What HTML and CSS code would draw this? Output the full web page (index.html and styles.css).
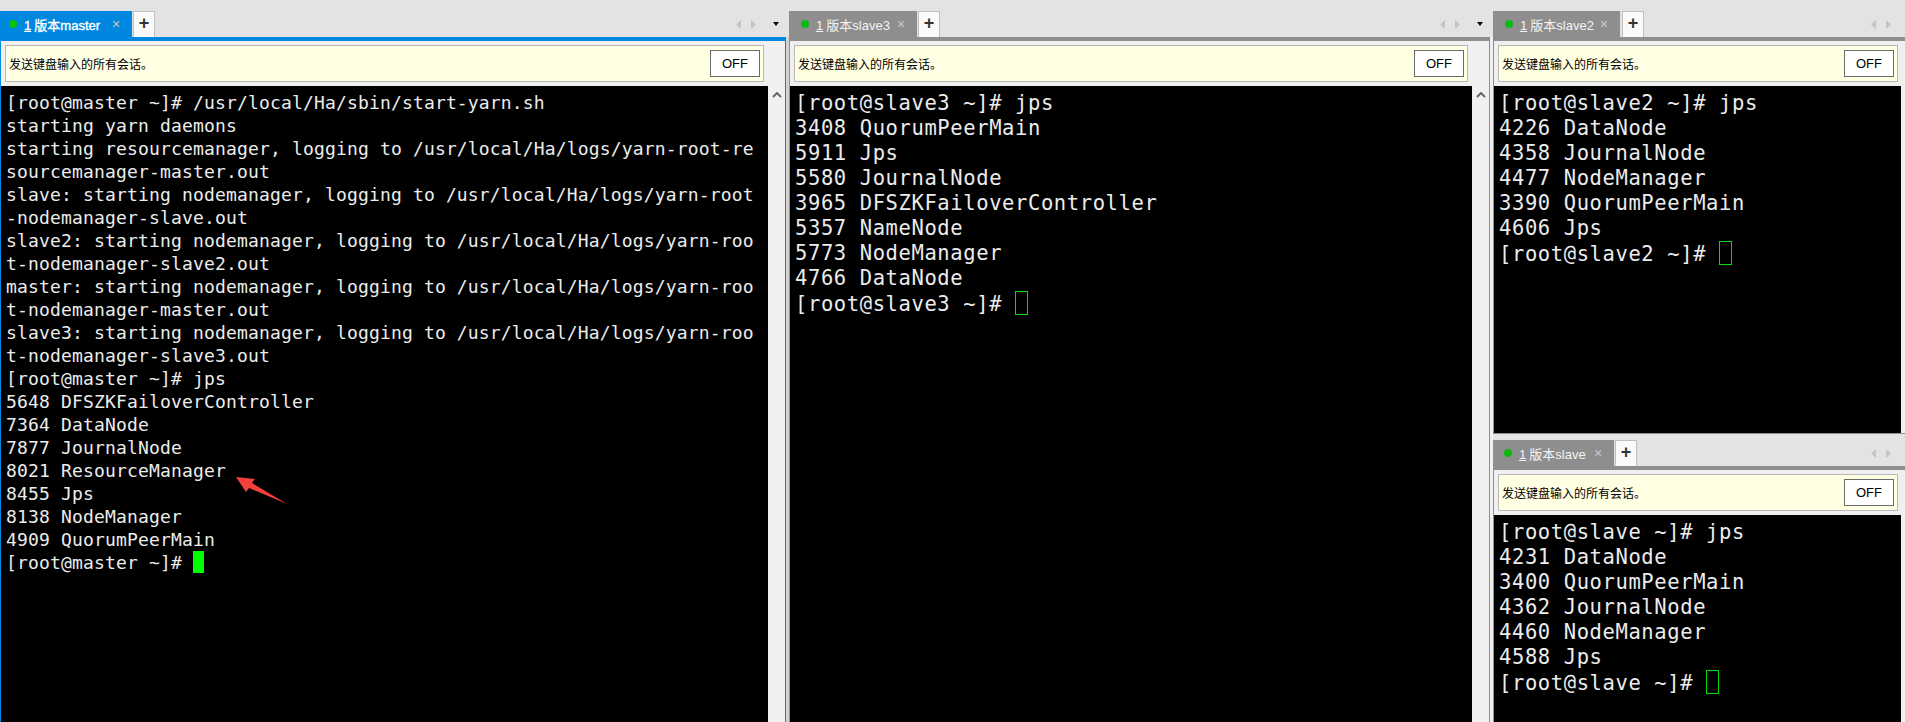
FILE: index.html
```html
<!DOCTYPE html>
<html lang="zh">
<head>
<meta charset="utf-8">
<title>Xshell</title>
<link rel="stylesheet" href="styles.css">
</head>
<body>
<div class="app">
  <section class="pane pane-main active">
    <div class="strip strip-top">
      <div class="tab"><span class="dot"></span><span class="tab-label"><u>1</u> 版本master</span><span class="close">×</span></div>
      <div class="plus">+</div>
      <div class="nav">
        <svg class="navs" width="20" height="9" viewBox="0 0 20 9"><path d="M5 0v9L0 4.5z" fill="#c4c4c4"/><path d="M15 0v9l5-4.5z" fill="#c4c4c4"/></svg>
        <svg class="caret" width="6" height="4" viewBox="0 0 6 4"><path d="M0 0h6L3 4z" fill="#000"/></svg>
      </div>
    </div>
    <div class="rule"></div>
    <div class="body">
      <div class="main">
        <div class="notice"><span>发送键盘输入的所有会话。</span><button class="off">OFF</button></div>
        <pre class="term term-sm">[root@master ~]# /usr/local/Ha/sbin/start-yarn.sh
starting yarn daemons
starting resourcemanager, logging to /usr/local/Ha/logs/yarn-root-re
sourcemanager-master.out
slave: starting nodemanager, logging to /usr/local/Ha/logs/yarn-root
-nodemanager-slave.out
slave2: starting nodemanager, logging to /usr/local/Ha/logs/yarn-roo
t-nodemanager-slave2.out
master: starting nodemanager, logging to /usr/local/Ha/logs/yarn-roo
t-nodemanager-master.out
slave3: starting nodemanager, logging to /usr/local/Ha/logs/yarn-roo
t-nodemanager-slave3.out
[root@master ~]# jps
5648 DFSZKFailoverController
7364 DataNode
7877 JournalNode
8021 ResourceManager
8455 Jps
8138 NodeManager
4909 QuorumPeerMain
[root@master ~]# <span class="cursor solid"></span></pre>
      </div>
      <div class="scroll"><svg width="10" height="6" viewBox="0 0 10 6"><path d="M1 5l4-4 4 4" fill="none" stroke="#666" stroke-width="2"/></svg></div>
    </div>
    <svg class="arrow" width="60" height="35" viewBox="0 0 60 35"><path d="M1 1L20 3 17 7 52 28 14 12 11 16z" fill="#f5403c"/></svg>
  </section>

  <section class="pane pane-mid">
    <div class="strip strip-top">
      <div class="tab"><span class="dot"></span><span class="tab-label"><u>1</u> 版本slave3</span><span class="close">×</span></div>
      <div class="plus">+</div>
      <div class="nav">
        <svg class="navs" width="20" height="9" viewBox="0 0 20 9"><path d="M5 0v9L0 4.5z" fill="#c4c4c4"/><path d="M15 0v9l5-4.5z" fill="#c4c4c4"/></svg>
        <svg class="caret" width="6" height="4" viewBox="0 0 6 4"><path d="M0 0h6L3 4z" fill="#000"/></svg>
      </div>
    </div>
    <div class="rule"></div>
    <div class="body">
      <div class="main">
        <div class="notice"><span>发送键盘输入的所有会话。</span><button class="off">OFF</button></div>
        <pre class="term term-lg">[root@slave3 ~]# jps
3408 QuorumPeerMain
5911 Jps
5580 JournalNode
3965 DFSZKFailoverController
5357 NameNode
5773 NodeManager
4766 DataNode
[root@slave3 ~]# <span class="cursor hollow"></span></pre>
      </div>
      <div class="scroll"><svg width="10" height="6" viewBox="0 0 10 6"><path d="M1 5l4-4 4 4" fill="none" stroke="#666" stroke-width="2"/></svg></div>
    </div>
  </section>

  <div class="stack">
    <section class="pane pane-side pane-upper">
      <div class="strip strip-top">
        <div class="tab"><span class="dot"></span><span class="tab-label"><u>1</u> 版本slave2</span><span class="close">×</span></div>
        <div class="plus">+</div>
        <div class="nav">
          <svg class="navs" width="20" height="9" viewBox="0 0 20 9"><path d="M5 0v9L0 4.5z" fill="#c4c4c4"/><path d="M15 0v9l5-4.5z" fill="#c4c4c4"/></svg>
        </div>
      </div>
      <div class="rule"></div>
      <div class="body">
        <div class="main">
          <div class="notice"><span>发送键盘输入的所有会话。</span><button class="off">OFF</button></div>
          <pre class="term term-lg">[root@slave2 ~]# jps
4226 DataNode
4358 JournalNode
4477 NodeManager
3390 QuorumPeerMain
4606 Jps
[root@slave2 ~]# <span class="cursor hollow"></span></pre>
        </div>
      </div>
    </section>
    <section class="pane pane-side pane-lower">
      <div class="strip strip-bottom">
        <div class="tab"><span class="dot"></span><span class="tab-label"><u>1</u> 版本slave</span><span class="close">×</span></div>
        <div class="plus">+</div>
        <div class="nav">
          <svg class="navs" width="20" height="9" viewBox="0 0 20 9"><path d="M5 0v9L0 4.5z" fill="#c4c4c4"/><path d="M15 0v9l5-4.5z" fill="#c4c4c4"/></svg>
        </div>
      </div>
      <div class="rule"></div>
      <div class="body">
        <div class="main">
          <div class="notice"><span>发送键盘输入的所有会话。</span><button class="off">OFF</button></div>
          <pre class="term term-lg">[root@slave ~]# jps
4231 DataNode
3400 QuorumPeerMain
4362 JournalNode
4460 NodeManager
4588 Jps
[root@slave ~]# <span class="cursor hollow"></span></pre>
        </div>
      </div>
    </section>
  </div>
</div>
</body>
</html>
```

FILE: styles.css
```css
* { box-sizing: border-box; }
html, body { margin: 0; height: 100%; overflow: hidden; }
body { font-family: "Liberation Sans", "Noto Sans CJK SC", sans-serif; background: #f0f0f0; }

.app { display: grid; grid-template-columns: 789px 704px 412px; height: 722px; }
.pane { position: relative; display: flex; flex-direction: column; min-height: 0; }
.stack { display: grid; grid-template-rows: 434px 288px; min-height: 0; }

/* tab strip */
.strip { display: flex; align-items: flex-end; background: #e3e3e3; flex: none; }
.strip-top { height: 37px; }
.strip-bottom { height: 32px; }
.rule { height: 4px; flex: none; background: #8e8e8e; }
.active .rule { background: #0088e0; }
.pane-main .rule, .pane-mid .rule { margin-right: 3px; }

.tab { display: flex; align-items: center; width: 128px; height: 26px; background: #8e8e8e; color: #f4f4f4; padding-left: 12px; font-size: 13px; }
.pane-main .tab { width: 132px; padding-left: 9px; background: #0088e0; color: #fff; }
.pane-main .tab-label { -webkit-text-stroke: 0.35px #fff; }
.pane-upper .tab { width: 127px; }
.pane-lower .tab { width: 121px; padding-left: 11px; }
.dot { width: 8px; height: 8px; border-radius: 50%; background: #0db80d; flex: none; margin-right: 7px; }
.pane-main .dot { background: #0ac40a; }
.tab-label { flex: 1; white-space: nowrap; word-spacing: -0.5px; }
.close { color: #c8c8c8; font-size: 14px; width: 20px; flex: none; }
.plus { width: 22px; height: 26px; margin-left: 1px; background: #fafafa; border: 1px solid #c0c0c0; border-bottom: 0; color: #333; font-size: 18px; font-weight: bold; line-height: 22px; text-align: center; }
.pane-upper .plus { margin-left: 2px; }

.nav { margin-left: auto; display: flex; align-items: center; height: 26px; padding-right: 10px; }
.pane-side .nav { padding-right: 14px; }
.caret { margin-left: 17px; }

/* body */
.body { flex: 1; display: flex; min-height: 0; background: #f0f0f0; }
.main { flex: 1; display: flex; flex-direction: column; min-width: 0; }
.scroll { width: 17px; flex: none; display: flex; justify-content: center; padding-top: 51px; }

.pane-main { background: #d2d2d2; }
.pane-main .body { border-left: 1px solid #0088e0; border-right: 1px solid #0088e0; margin-right: 3px; }
.pane-mid .body { border-left: 1px solid #8e8e8e; border-right: 1px solid #8e8e8e; margin-right: 3px; }
.pane-side .body { border-left: 1px solid #8e8e8e; }
.pane-side .main { margin-right: 4px; }
.pane-upper .body { border-bottom: 1px solid #8e8e8e; }

.notice { flex: none; height: 37px; margin: 4px; padding: 0 3px; display: flex; align-items: center; justify-content: space-between; background: #ffffe3; border: 1px solid #b8b8b8; color: #000; font-size: 12px; font-family: "Noto Sans CJK SC", sans-serif; }
.pane-side .notice { margin-right: 3px; }
.off { width: 50px; height: 27px; padding: 0; background: #fff; border: 1px solid #6b6b6b; color: #000; font: 13px "Liberation Sans", sans-serif; }

/* terminals */
.term { flex: 1; margin: 0; background: #000; color: #ececec; font-family: "DejaVu Sans Mono", monospace; white-space: pre; overflow: hidden; min-height: 0; }
.term-sm { font-size: 18px; letter-spacing: 0.16px; line-height: 23px; padding: 5px 0 0 5px; }
.term-lg { font-size: 20.5px; letter-spacing: 0.6px; line-height: 25px; padding: 5px 0 0 5px; }
.cursor { display: inline-block; vertical-align: -4px; }
.solid { width: 11px; height: 22px; background: #00ff00; }
.hollow { width: 13px; height: 24px; border: 1px solid #00e000; }

.arrow { position: absolute; left: 235px; top: 476px; }
```
